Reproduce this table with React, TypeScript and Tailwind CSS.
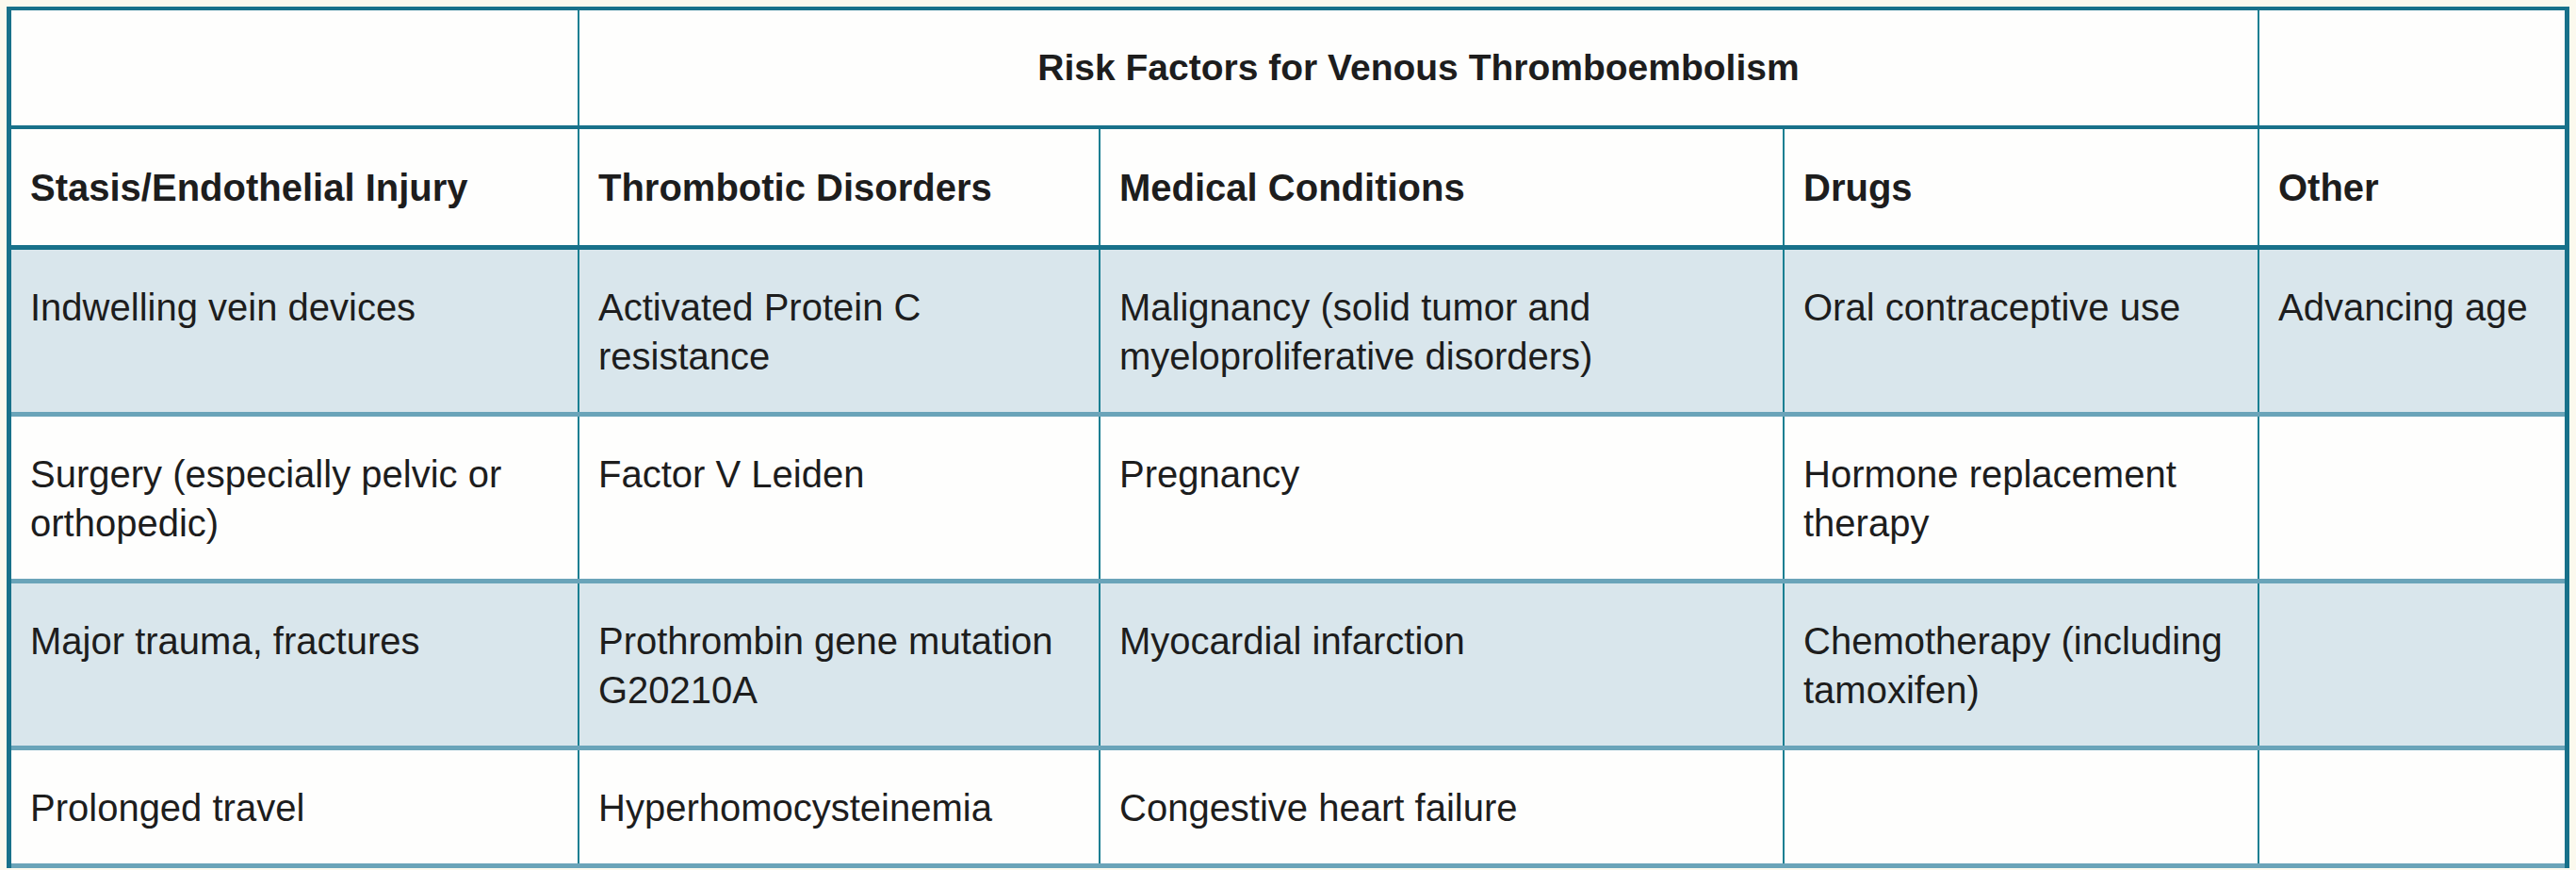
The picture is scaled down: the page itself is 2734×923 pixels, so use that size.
const rows: { shaded: boolean; cells: string[][] }[] = [
  {
    shaded: true,
    cells: [
      ["Indwelling vein devices"],
      ["Activated Protein C", "resistance"],
      ["Malignancy (solid tumor and", "myeloproliferative disorders)"],
      ["Oral contraceptive use"],
      ["Advancing age"],
    ],
  },
  {
    shaded: false,
    cells: [
      ["Surgery (especially pelvic or", "orthopedic)"],
      ["Factor V Leiden"],
      ["Pregnancy"],
      ["Hormone replacement", "therapy"],
      [],
    ],
  },
  {
    shaded: true,
    cells: [
      ["Major trauma, fractures"],
      ["Prothrombin gene mutation", "G20210A"],
      ["Myocardial infarction"],
      ["Chemotherapy (including", "tamoxifen)"],
      [],
    ],
  },
  {
    shaded: false,
    cells: [["Prolonged travel"], ["Hyperhomocysteinemia"], ["Congestive heart failure"], [], []],
  },
];

const headers = ["Stasis/Endothelial Injury", "Thrombotic Disorders", "Medical Conditions", "Drugs", "Other"];

export default function App() {
  return (
    <div className="min-h-[923px] bg-[#fbf9ee] pt-[7px] pl-[7px] font-['Liberation_Sans',Arial,sans-serif] text-[#1d1d1d]">
      <div className="w-[2720px] border-x-[5px] border-t-[4px] border-[#18718a] bg-[#fefefd]">
        {/* title row */}
        <div className="grid grid-cols-[601px_1783px_326px] border-b-[4px] border-[#18718a]">
          <div className="h-[122px]" />
          <div className="flex h-[122px] items-center justify-center border-l-2 border-[#1a7f92] text-[39px] font-bold">
            Risk Factors for Venous Thromboembolism
          </div>
          <div className="h-[122px] border-l-2 border-[#1a7f92]" />
        </div>

        {/* column headers */}
        <div className="grid grid-cols-[601px_553px_726px_504px_326px] border-b-[5px] border-[#18718a]">
          {headers.map((h, i) => (
            <div
              key={h}
              className={`flex h-[123px] items-center pl-[20px] text-[40px] font-bold ${i > 0 ? "border-l-2 border-[#1a7f92]" : ""}`}
            >
              {h}
            </div>
          ))}
        </div>

        {/* body */}
        {rows.map((row, r) => (
          <div
            key={r}
            className={`grid grid-cols-[601px_553px_726px_504px_326px] border-b-[5px] border-[#6aa4b9] ${row.shaded ? "bg-[#d9e6ec]" : "bg-[#fefefd]"}`}
          >
            {row.cells.map((lines, c) => (
              <div
                key={c}
                className={`pt-[35px] pb-[33px] pl-[20px] pr-[10px] text-[40px] leading-[52px] ${c > 0 ? "border-l-2 border-[#1a7f92]" : ""}`}
              >
                {lines.map((l, k) => (
                  <div key={k} className="whitespace-nowrap">
                    {l}
                  </div>
                ))}
              </div>
            ))}
          </div>
        ))}
      </div>
    </div>
  );
}
